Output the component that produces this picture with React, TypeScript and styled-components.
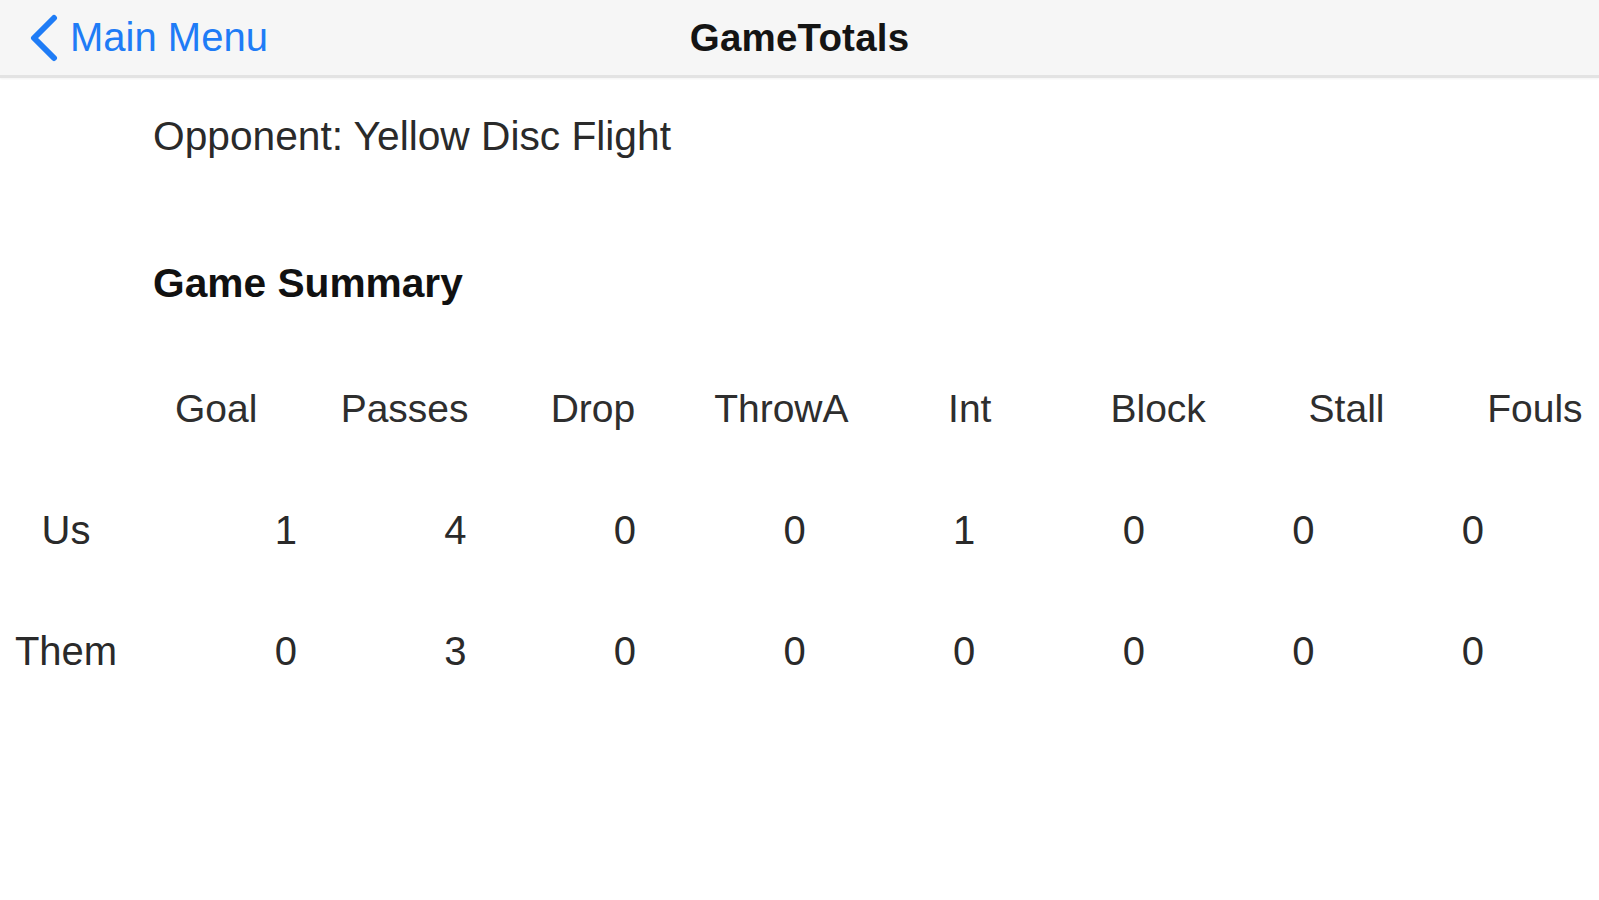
import React from "react";
import styled, { createGlobalStyle } from "styled-components";

const GlobalStyle = createGlobalStyle`
  html, body {
    margin: 0;
    padding: 0;
    background: #fff;
    overflow: hidden;
  }
  body {
    font-family: "Liberation Sans", Arial, Helvetica, sans-serif;
    color: #262626;
  }
`;

const Page = styled.div`
  width: 1599px;
  height: 900px;
  background: #fff;
  overflow: hidden;
`;

const NavBar = styled.div`
  height: 75px;
  display: grid;
  grid-template-columns: 1fr auto 1fr;
  align-items: center;
  background: #f6f6f6;
  border-bottom: 3px solid #e3e3e3;
  box-shadow: 0 1px 2px rgba(0, 0, 0, 0.05);
`;

const BackButton = styled.button`
  justify-self: start;
  display: flex;
  align-items: center;
  gap: 12px;
  padding: 0 0 0 30px;
  border: none;
  background: none;
  color: #1f7cf6;
  font-family: inherit;
  font-size: 40px;
  cursor: pointer;
`;

const Title = styled.h1`
  margin: 0;
  font-size: 38.5px;
  font-weight: 700;
  color: #141414;
  letter-spacing: 0.2px;
`;

const Content = styled.div`
  padding-top: 34px;
`;

const Line = styled.div<{ $bold?: boolean; $gap?: number }>`
  margin: ${(p) => p.$gap ?? 0}px 0 0 153px;
  line-height: 48px;
  font-size: 40.7px;
  font-weight: ${(p) => (p.$bold ? 700 : 400)};
  color: ${(p) => (p.$bold ? "#111" : "#2a2a2a")};
`;

const Table = styled.div`
  margin-top: 78px;
`;

const HeaderRow = styled.div`
  display: grid;
  grid-template-columns: repeat(8, 188.4px);
  padding-left: 122px;
  height: 121px;
  line-height: 48px;
  font-size: 39px;
  color: #2e2e2e;
  text-align: center;
`;

const StatRow = styled.div`
  display: grid;
  grid-template-columns: 201px repeat(8, 169.6px);
  height: 121px;
  line-height: 48px;
  font-size: 40px;
  color: #2a2a2a;
  text-align: center;
`;

const RowLabel = styled.div`
  width: 132px;
`;

const Cell = styled.div``;

const columns = ["Goal", "Passes", "Drop", "ThrowA", "Int", "Block", "Stall", "Fouls"];

const rows = [
  { label: "Us", values: [1, 4, 0, 0, 1, 0, 0, 0] },
  { label: "Them", values: [0, 3, 0, 0, 0, 0, 0, 0] },
];

const Chevron = () => (
  <svg width="28" height="48" viewBox="0 0 28 48" fill="none">
    <polyline
      points="24,4 4,24 24,44"
      stroke="#1f7cf6"
      strokeWidth="6"
      strokeLinecap="round"
      strokeLinejoin="round"
    />
  </svg>
);

const App: React.FC = () => {
  return (
    <Page>
      <GlobalStyle />
      <NavBar>
        <BackButton>
          <Chevron />
          Main Menu
        </BackButton>
        <Title>GameTotals</Title>
        <div />
      </NavBar>

      <Content>
        <Line>Opponent: Yellow Disc Flight</Line>
        <Line $bold $gap={99}>
          Game Summary
        </Line>

        <Table>
          <HeaderRow>
            {columns.map((c) => (
              <Cell key={c}>{c}</Cell>
            ))}
          </HeaderRow>
          {rows.map((r) => (
            <StatRow key={r.label}>
              <RowLabel>{r.label}</RowLabel>
              {r.values.map((v, i) => (
                <Cell key={i}>{v}</Cell>
              ))}
            </StatRow>
          ))}
        </Table>
      </Content>
    </Page>
  );
};

export default App;
